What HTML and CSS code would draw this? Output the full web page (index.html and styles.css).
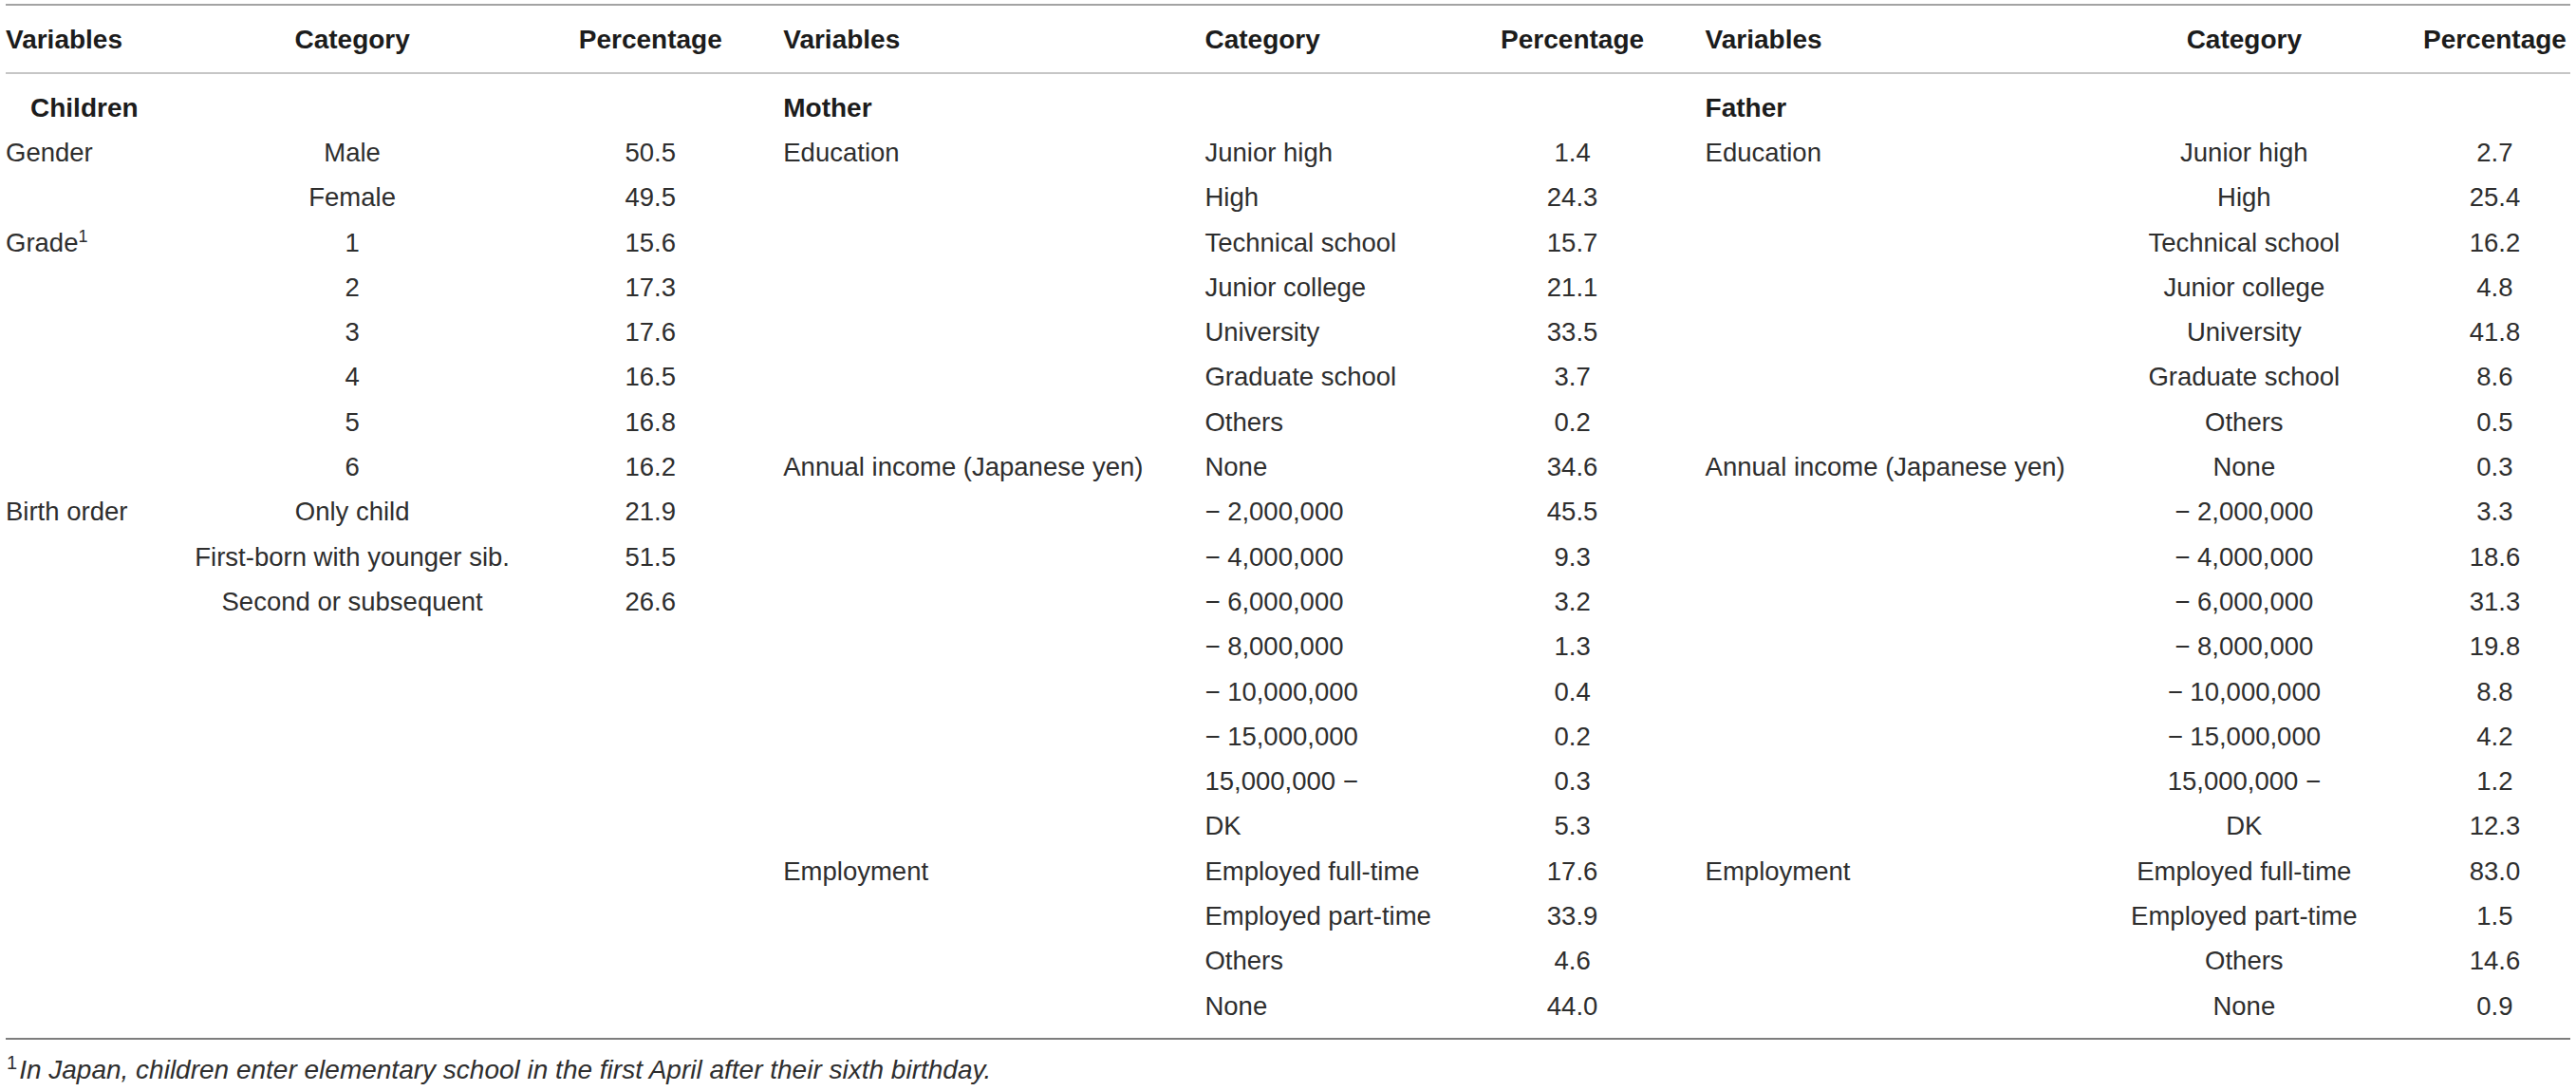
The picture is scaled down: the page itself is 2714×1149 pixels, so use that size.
FILE: index.html
```html
<!DOCTYPE html>
<html lang="en">
<head>
  <meta charset="UTF-8">
  <title>Sample characteristics</title>
  <link rel="stylesheet" href="styles.css">
</head>
<body>
  <div class="table-wrap">
    <table class="data-table">
      <colgroup>
        <col class="w-var1"><col class="w-cat1"><col class="w-pct">
        <col class="w-var2"><col class="w-cat2"><col class="w-pct">
        <col class="w-var3"><col class="w-cat3"><col class="w-pct3">
      </colgroup>
      <thead>
        <tr>
          <th>Variables</th><th>Category</th><th>Percentage</th>
          <th>Variables</th><th>Category</th><th>Percentage</th>
          <th>Variables</th><th>Category</th><th>Percentage</th>
        </tr>
      </thead>
      <tbody>
        <tr class="group-row">
          <td class="group-first">Children</td><td></td><td></td>
          <td>Mother</td><td></td><td></td>
          <td>Father</td><td></td><td></td>
        </tr>
        <tr>
          <td>Gender</td><td>Male</td><td>50.5</td>
          <td>Education</td><td>Junior high</td><td>1.4</td>
          <td>Education</td><td>Junior high</td><td>2.7</td>
        </tr>
        <tr>
          <td></td><td>Female</td><td>49.5</td>
          <td></td><td>High</td><td>24.3</td>
          <td></td><td>High</td><td>25.4</td>
        </tr>
        <tr>
          <td>Grade<sup>1</sup></td><td>1</td><td>15.6</td>
          <td></td><td>Technical school</td><td>15.7</td>
          <td></td><td>Technical school</td><td>16.2</td>
        </tr>
        <tr>
          <td></td><td>2</td><td>17.3</td>
          <td></td><td>Junior college</td><td>21.1</td>
          <td></td><td>Junior college</td><td>4.8</td>
        </tr>
        <tr>
          <td></td><td>3</td><td>17.6</td>
          <td></td><td>University</td><td>33.5</td>
          <td></td><td>University</td><td>41.8</td>
        </tr>
        <tr>
          <td></td><td>4</td><td>16.5</td>
          <td></td><td>Graduate school</td><td>3.7</td>
          <td></td><td>Graduate school</td><td>8.6</td>
        </tr>
        <tr>
          <td></td><td>5</td><td>16.8</td>
          <td></td><td>Others</td><td>0.2</td>
          <td></td><td>Others</td><td>0.5</td>
        </tr>
        <tr>
          <td></td><td>6</td><td>16.2</td>
          <td>Annual income (Japanese yen)</td><td>None</td><td>34.6</td>
          <td>Annual income (Japanese yen)</td><td>None</td><td>0.3</td>
        </tr>
        <tr>
          <td>Birth order</td><td>Only child</td><td>21.9</td>
          <td></td><td>&minus; 2,000,000</td><td>45.5</td>
          <td></td><td>&minus; 2,000,000</td><td>3.3</td>
        </tr>
        <tr>
          <td></td><td>First-born with younger sib.</td><td>51.5</td>
          <td></td><td>&minus; 4,000,000</td><td>9.3</td>
          <td></td><td>&minus; 4,000,000</td><td>18.6</td>
        </tr>
        <tr>
          <td></td><td>Second or subsequent</td><td>26.6</td>
          <td></td><td>&minus; 6,000,000</td><td>3.2</td>
          <td></td><td>&minus; 6,000,000</td><td>31.3</td>
        </tr>
        <tr>
          <td></td><td></td><td></td>
          <td></td><td>&minus; 8,000,000</td><td>1.3</td>
          <td></td><td>&minus; 8,000,000</td><td>19.8</td>
        </tr>
        <tr>
          <td></td><td></td><td></td>
          <td></td><td>&minus; 10,000,000</td><td>0.4</td>
          <td></td><td>&minus; 10,000,000</td><td>8.8</td>
        </tr>
        <tr>
          <td></td><td></td><td></td>
          <td></td><td>&minus; 15,000,000</td><td>0.2</td>
          <td></td><td>&minus; 15,000,000</td><td>4.2</td>
        </tr>
        <tr>
          <td></td><td></td><td></td>
          <td></td><td>15,000,000 &minus;</td><td>0.3</td>
          <td></td><td>15,000,000 &minus;</td><td>1.2</td>
        </tr>
        <tr>
          <td></td><td></td><td></td>
          <td></td><td>DK</td><td>5.3</td>
          <td></td><td>DK</td><td>12.3</td>
        </tr>
        <tr>
          <td></td><td></td><td></td>
          <td>Employment</td><td>Employed full-time</td><td>17.6</td>
          <td>Employment</td><td>Employed full-time</td><td>83.0</td>
        </tr>
        <tr>
          <td></td><td></td><td></td>
          <td></td><td>Employed part-time</td><td>33.9</td>
          <td></td><td>Employed part-time</td><td>1.5</td>
        </tr>
        <tr>
          <td></td><td></td><td></td>
          <td></td><td>Others</td><td>4.6</td>
          <td></td><td>Others</td><td>14.6</td>
        </tr>
        <tr class="last-row">
          <td></td><td></td><td></td>
          <td></td><td>None</td><td>44.0</td>
          <td></td><td>None</td><td>0.9</td>
        </tr>
      </tbody>
    </table>
    <p class="footnote"><sup>1</sup><em>In Japan, children enter elementary school in the first April after their sixth birthday.</em></p>
  </div>
</body>
</html>
```

FILE: styles.css
```css
body {
  margin: 0;
  background: #fff;
  color: #2e2e2e;
  font-family: 'Liberation Sans', Arial, sans-serif;
}

.table-wrap {
  padding: 4px 0 0 6px;
  width: 2702px;
}

.data-table {
  width: 2702px;
  table-layout: fixed;
  border-collapse: collapse;
  font-size: 27.5px;
}

.w-var1 { width: 136px; }
.w-cat1 { width: 458px; }
.w-pct  { width: 170px; }
.w-var2 { width: 493px; }
.w-cat2 { width: 308px; }
.w-var3 { width: 438px; }
.w-cat3 { width: 369px; }
.w-pct3 { width: 159px; }

.data-table thead tr {
  border-top: 2px solid #a3a3a3;
  border-bottom: 2px solid #c6c6c6;
}

.data-table th {
  font-size: 28px;
  font-weight: 700;
  color: #1c1c1c;
  line-height: 32px;
  padding: 20px 0 18px;
  text-align: left;
  white-space: nowrap;
}

.data-table td {
  height: 47.3px;
  line-height: 30px;
  padding: 0;
  white-space: nowrap;
  vertical-align: middle;
}

/* category and percentage columns are centred, except the mother's category */
.data-table th:nth-child(2), .data-table td:nth-child(2),
.data-table th:nth-child(3), .data-table td:nth-child(3),
.data-table th:nth-child(6), .data-table td:nth-child(6),
.data-table th:nth-child(8), .data-table td:nth-child(8),
.data-table th:nth-child(9), .data-table td:nth-child(9) {
  text-align: center;
}

.data-table th:nth-child(4), .data-table td:nth-child(4),
.data-table th:nth-child(7), .data-table td:nth-child(7) {
  padding-left: 55px;
}

.data-table th:nth-child(5), .data-table td:nth-child(5) {
  padding-left: 6px;
}

.group-row td {
  font-size: 28px;
  font-weight: 700;
  color: #1c1c1c;
  padding-top: 12px;
}

.group-row td.group-first {
  padding-left: 26px;
}

.last-row td {
  padding-bottom: 10px;
}

.data-table tbody {
  border-bottom: 2px solid #7d7d7d;
}

.data-table sup {
  font-size: 18px;
  line-height: 0;
  vertical-align: 10px;
}

.footnote {
  margin: 15px 0 0 1px;
  font-size: 28px;
  line-height: 34px;
}

.footnote sup {
  font-size: 20px;
  line-height: 0;
  vertical-align: 10px;
  margin-right: 2px;
}
```
